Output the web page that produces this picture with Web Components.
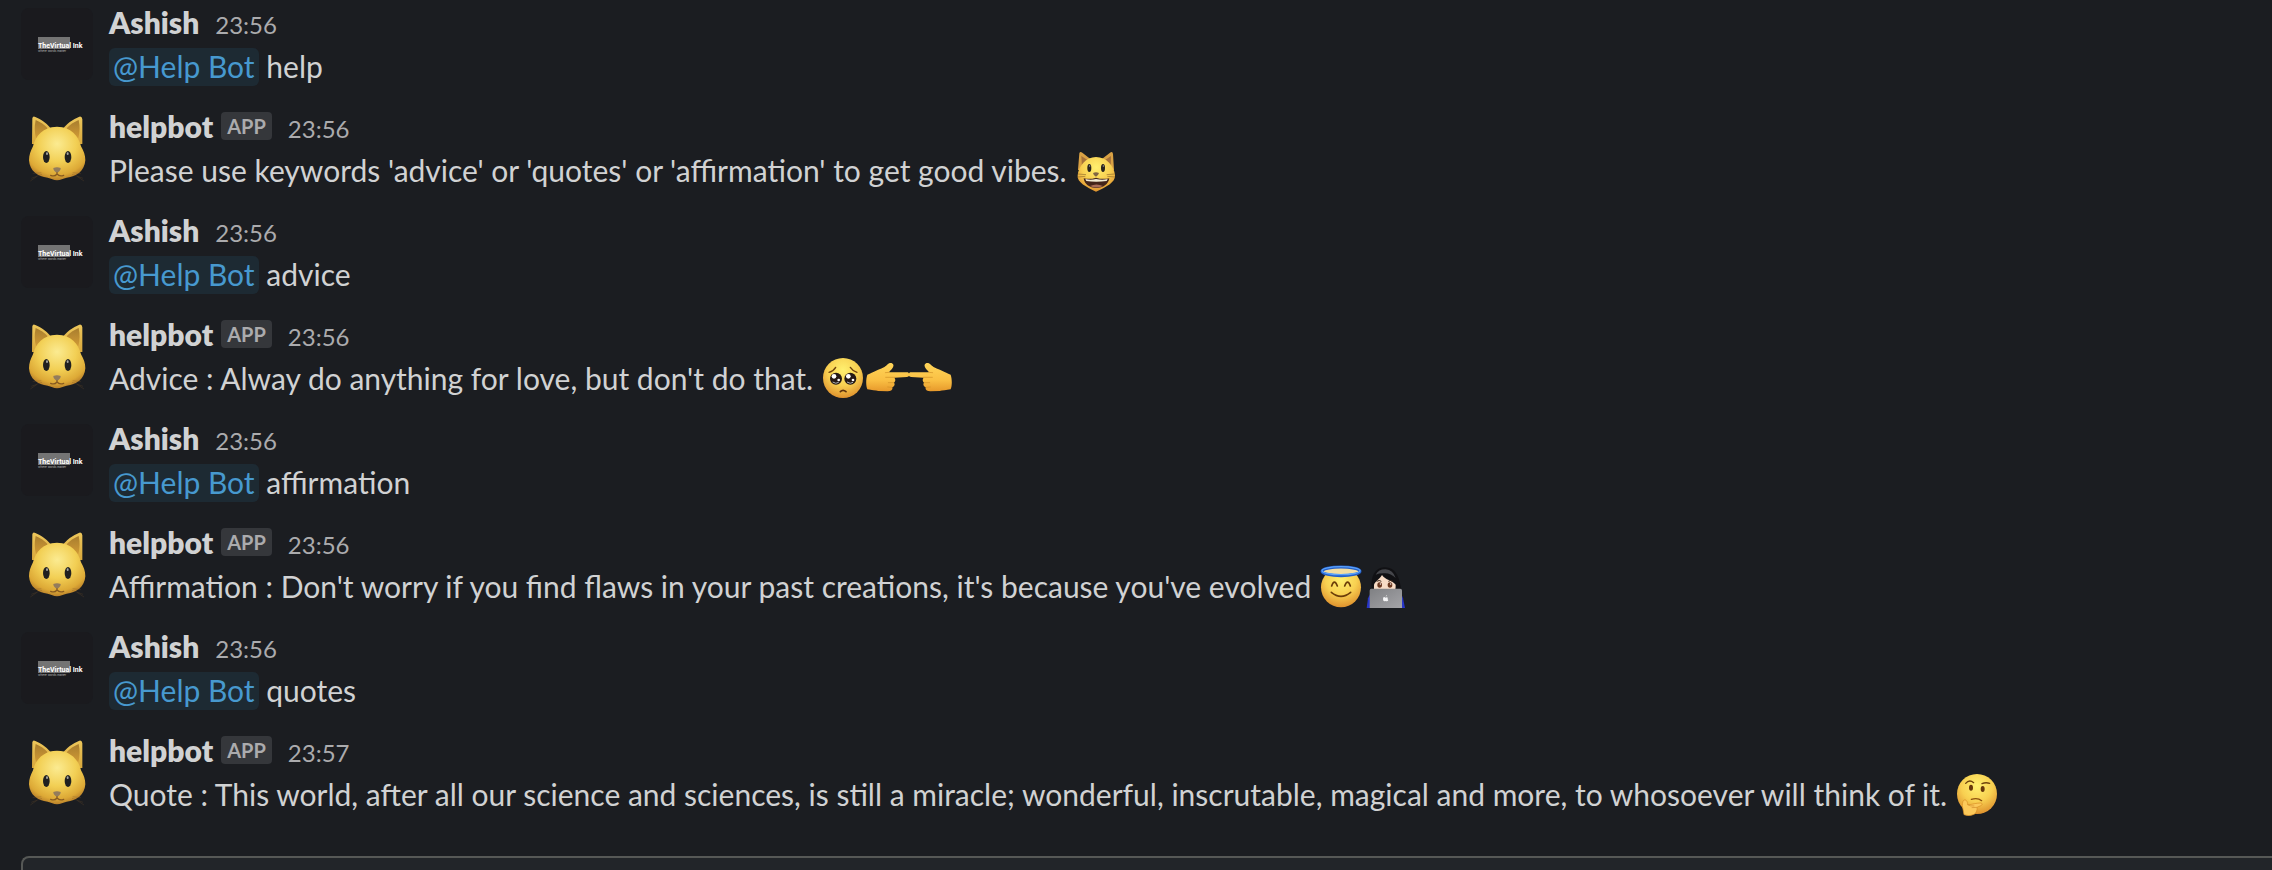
<!DOCTYPE html>
<html lang="en">
<head>
<meta charset="utf-8">
<meta name="viewport" content="width=device-width, initial-scale=1">
<title>Help Bot channel</title>
<style>
html, body { margin: 0; height: 100%; }
body {
  --bg: #1b1d21; --text: #d1d2d3; --muted: #ababad; --link: #4799cf; --mention: #1d2a33;
  --badge: #35373b; --field: #222529; --line: #565856;
  background: var(--bg); color: var(--text);
  font: 400 30px/44px Lato, "Liberation Sans", sans-serif;
}
</style>
</head>
<body>
<chat-pane>
  <chat-message name="Ashish" time="23:56"><user-mention>@Help Bot</user-mention> help</chat-message>
  <chat-message name="helpbot" time="23:56" app>Please use keywords 'advice' or 'quotes' or 'affirmation' to get good vibes. <emoji-icon name="cat"></emoji-icon></chat-message>
  <chat-message name="Ashish" time="23:56"><user-mention>@Help Bot</user-mention> advice</chat-message>
  <chat-message name="helpbot" time="23:56" app>Advice : Alway do anything for love, but don't do that. <emoji-icon name="pleading"></emoji-icon><emoji-icon name="right"></emoji-icon><emoji-icon name="left"></emoji-icon></chat-message>
  <chat-message name="Ashish" time="23:56"><user-mention>@Help Bot</user-mention> affirmation</chat-message>
  <chat-message name="helpbot" time="23:56" app>Affirmation : Don't worry if you find flaws in your past creations, it's because you've evolved <emoji-icon name="halo"></emoji-icon><emoji-icon name="coder"></emoji-icon></chat-message>
  <chat-message name="Ashish" time="23:56"><user-mention>@Help Bot</user-mention> quotes</chat-message>
  <chat-message name="helpbot" time="23:57" app>Quote : This world, after all our science and sciences, is still a miracle; wonderful, inscrutable, magical and more, to whosoever will think of it. <emoji-icon name="thinking"></emoji-icon></chat-message>
  <message-composer slot="composer"></message-composer>
</chat-pane>

<script>
const define = (tag, render) => customElements.define(tag, class extends HTMLElement {
  constructor() { super(); this.attachShadow({ mode: 'open' }); }
  connectedCallback() { this.shadowRoot.innerHTML = render(this); }
});

/* Emoji drawings, in a 132-unit square (three units to a pixel). */
const face = '<circle cx="66" cy="66" r="60" fill="url(#f)"/>';
const hand = `
  <path d="M7 56C17 52 24 49 30 46C42 39 57 36 66 27C73 19 82 20 85 26C87 32 80 39 74 46L73 49L126 49C135 49 135 63 126 63L88 65C92 69 92 76 87 80C91 85 88 92 82 94C84 102 78 106 68 106L40 105C32 104 20 102 7 100C2 88 3 68 7 56Z" fill="url(#h)"/>
  <path d="M62 64L89 64M70 80L86 80M68 93L80 94M73 49L61 50" fill="none" stroke="#d08f26" stroke-width="2" stroke-linecap="round"/>`;
const art = {
  cat: `
    <path d="M12 66L16 16Q18 9 25 14L53 36L80 36L108 14Q116 9 117 18L120 66Z" fill="#d9a144"/>
    <path d="M22 24L44 38L24 58ZM111 24L90 38L110 58Z" fill="#a5713a"/>
    <path d="M66 27C97 27 121 54 123 82C125 103 96 118 66 131C38 118 8 103 11 82C14 54 36 27 66 27Z" fill="url(#f)"/>
    <ellipse cx="46" cy="60" rx="6" ry="12" fill="#29231d"/><ellipse cx="87" cy="60" rx="6" ry="12" fill="#29231d"/>
    <circle cx="47" cy="54" r="2" fill="#aaa"/><circle cx="88" cy="54" r="2" fill="#aaa"/>
    <path d="M57 75Q66 71 75 75Q73 82 66 86Q58 82 57 75Z" fill="#816643"/>
    <path d="M29 91Q48 95 66 89Q85 95 106 91C103 109 88 120 67 120S31 108 29 91Z" fill="#44251a"/>
    <path d="M34 93Q50 98 66 93Q85 98 101 93L98 99Q66 104 37 99Z" fill="#f3ecd4"/>
    <path d="M48 114Q67 105 87 114Q67 123 48 114Z" fill="#a86d58"/>
    <path d="M12 78L36 80M11 87L34 85M122 78L98 80M123 87L100 85" stroke="#94702c" stroke-width="2"/>`,
  pleading: face + `
    <circle cx="45" cy="68" r="18" fill="#251915"/><circle cx="88" cy="68" r="18" fill="#251915"/>
    <circle cx="39" cy="61" r="7" fill="#fff"/><circle cx="82" cy="61" r="7" fill="#fff"/>
    <circle cx="53" cy="72" r="4" fill="#fff"/><circle cx="96" cy="72" r="4" fill="#fff"/>
    <path d="M35 78Q45 85 53 79M78 78Q88 85 96 79" fill="none" stroke="#aeb5ba" stroke-width="3"/>
    <path d="M24 49Q38 45 44 34M88 34Q95 45 108 49" fill="none" stroke="#71430d" stroke-width="4" stroke-linecap="round"/>
    <path d="M58 107Q66 99 75 107" fill="none" stroke="#5c310d" stroke-width="5" stroke-linecap="round"/>`,
  right: hand,
  left: `<g transform="matrix(-1 0 0 1 132 0)">${hand}</g>`,
  halo: `
    <circle cx="66" cy="70" r="60" fill="url(#f)"/>
    <ellipse cx="66" cy="22" rx="54" ry="10" fill="#f3dda0"/>
    <ellipse cx="66" cy="22" rx="57" ry="13" fill="none" stroke="#245fc9" stroke-width="9"/>
    <ellipse cx="66" cy="20" rx="57" ry="12" fill="none" stroke="#5ba2fa" stroke-width="4"/>
    <path d="M38 66Q46 43 55 66M77 66Q86 43 94 66M37 85Q66 109 95 85" fill="none" stroke="#6b3d09" stroke-width="5" stroke-linecap="round"/>`,
  coder: `
    <path d="M11 132L15 103Q20 88 35 85L102 85Q116 88 120 103L126 132Z" fill="#2735c7"/>
    <path d="M26 76C22 35 38 11 62 10C94 7 107 33 113 67Q116 85 109 98L88 94L43 88L24 80Z" fill="#111114"/>
    <path d="M38 32Q48 15 68 16Q90 18 98 42Q82 26 62 28Q47 28 38 32Z" fill="#45464b"/>
    <path d="M33 64C33 54 50 46 57 33C67 49 88 48 98 62C99 86 87 106 65 106S31 88 33 64Z" fill="#f8dcc6"/>
    <ellipse cx="50" cy="63" rx="7" ry="8" fill="#6a371f"/><ellipse cx="81" cy="63" rx="7" ry="8" fill="#6a371f"/>
    <circle cx="52" cy="60" r="2" fill="#fff"/><circle cx="83" cy="60" r="2" fill="#fff"/>
    <path d="M41 52Q49 47 55 52M76 52Q83 47 90 52" fill="none" stroke="#382419" stroke-width="3"/>
    <path d="M25 74H112Q117 74 117 80V132H20V80Q20 74 25 74Z" fill="url(#m)"/>
    <path d="M68 101Q60 96 60 105Q60 114 68 111Q74 114 76 108Q71 105 75 102Q72 98 68 101ZM68 98Q69 93 72 93Q72 97 68 98Z" fill="#f5f5f6"/>`,
  thinking: face + `
    <path d="M32 34Q43 21 56 32M81 35Q92 30 104 34" fill="none" stroke="#6f430d" stroke-width="4" stroke-linecap="round"/>
    <ellipse cx="48" cy="47" rx="6" ry="9" fill="#67370b"/><ellipse cx="83" cy="51" rx="6" ry="9" fill="#67370b"/>
    <path d="M49 82Q68 76 80 86" fill="none" stroke="#8b500e" stroke-width="4" stroke-linecap="round"/>
    <path d="M27 128L22 101C22 90 25 84 28 84C34 82 38 90 38 98C48 99 56 94 75 93C83 92 84 100 75 102L66 106C68 113 64 122 58 127Q43 135 27 128Z" fill="#fcc95a" stroke="#d88c23" stroke-width="2"/>
    <path d="M38 98Q46 103 58 102M66 106L50 107" fill="none" stroke="#d08a2a" stroke-width="2"/>`
};
const labels = { cat: 'grinning cat', pleading: 'pleading face', right: 'pointing right', left: 'pointing left',
  halo: 'smiling face with halo', coder: 'technologist', thinking: 'thinking face' };

define('emoji-icon', el => {
  const n = el.getAttribute('name');
  return `<style>:host{display:inline-block;width:44px;height:44px;vertical-align:top}svg{display:block;width:100%;height:100%}</style>
  <svg viewBox="0 0 132 132" role="img" aria-label="${labels[n]}"><defs>
    <radialGradient id="f" cx=".5" cy=".3" r=".7"><stop offset="0" stop-color="#fff06f"/><stop offset=".55" stop-color="#f8d051"/><stop offset="1" stop-color="#df922e"/></radialGradient>
    <linearGradient id="h" x2="0" y2="1"><stop stop-color="#ffd559"/><stop offset=".6" stop-color="#fac044"/><stop offset="1" stop-color="#e7992b"/></linearGradient>
    <linearGradient id="m" x2="1" y2="1"><stop stop-color="#7f8083"/><stop offset="1" stop-color="#a4a4a8"/></linearGradient>
  </defs>${art[n]}</svg>`;
});

define('user-avatar', el => `<style>:host{display:block;width:72px;height:72px;flex:none}svg{display:block;width:100%;height:100%}</style>` +
  (el.hasAttribute('app') ? `
  <svg viewBox="0 0 216 216" role="img" aria-label="helpbot"><defs>
    <radialGradient id="c" cx=".5" cy=".32" r=".68"><stop offset="0" stop-color="#fbeb91"/><stop offset=".5" stop-color="#f2cf54"/><stop offset=".85" stop-color="#dda936"/><stop offset="1" stop-color="#b9802a"/></radialGradient>
    <linearGradient id="e" x2="0" y2="1"><stop stop-color="#edc75b"/><stop offset="1" stop-color="#d9a83c"/></linearGradient>
    <linearGradient id="i" x2="0" y2="1"><stop stop-color="#a87d2e"/><stop offset="1" stop-color="#d09a35"/></linearGradient></defs>
    <path d="M33 96L34 19Q36 10 43 15Q70 26 88 47L128 47Q146 26 175 14Q183 12 184 22L184 96Z" fill="url(#e)"/>
    <path d="M44 24Q66 33 80 49L45 79Q38 52 44 24ZM173 24Q151 33 137 49L172 79Q179 52 173 24Z" fill="url(#i)"/>
    <path d="M108 44C149 44 174 73 180 103C188 117 193 129 193 145C191 177 166 195 137 197C126 199 119 205 108 205C97 205 91 199 80 197C50 194 26 177 24 145C24 129 29 117 36 103C42 73 67 44 108 44Z" fill="url(#c)"/>
    <ellipse cx="76" cy="135" rx="10" ry="18" fill="#202020"/><ellipse cx="141" cy="135" rx="10" ry="18" fill="#202020"/>
    <ellipse cx="78" cy="125" rx="3" ry="4" fill="#a5a5a0"/><ellipse cx="140" cy="125" rx="3" ry="4" fill="#a5a5a0"/>
    <path d="M97 168Q108 163 119 168Q120 175 108 183Q96 175 97 168Z" fill="#937c5c"/>
    <path d="M108 182V186M89 190Q101 195 108 186Q116 195 128 190" fill="none" stroke="#875a20" stroke-width="4" stroke-linecap="round"/>
    <path d="M61 182L35 185M63 187L31 199M155 182L180 185M153 187L186 199M48 193L28 207M168 193L189 207" stroke="#72512a" stroke-width="2" opacity=".4"/>
  </svg>` : `
  <svg viewBox="0 0 72 72" role="img" aria-label="Ashish">
    <rect width="72" height="72" rx="8" fill="#1a1a1e"/><rect x="17" y="29" width="32" height="12" fill="#747474"/>
    <text x="17" y="40" font-family="Roboto, sans-serif" font-size="7" font-weight="700" fill="#fff">TheVirtual Ink</text>
    <text x="17" y="44" font-family="Inter, sans-serif" font-size="3" fill="#bbb">where words matter</text>
  </svg>`));

define('user-mention', () => `<style>
  a{color:var(--link);background:var(--mention);border-radius:6px;padding:0 4px 2px;text-decoration:none}
  </style><a href="#help-bot"><slot></slot></a>`);

define('chat-message', el => {
  const app = el.hasAttribute('app');
  return `<style>
  :host{display:flex;gap:16px;padding:0 20px 16px 21px}
  user-avatar{margin-top:8px}
  .body{flex:1;min-width:0}
  header{display:flex;align-items:baseline;height:44px}
  b{font-weight:800}
  .badge{align-self:center;margin-left:8px;padding:0 6px;border-radius:4px;background:var(--badge);color:var(--muted);font-size:20px;line-height:28px;font-weight:700}
  time{margin-left:16px;color:var(--muted);font-size:24px;line-height:24px}
  p{margin:0}
  </style>
  <user-avatar ${app ? 'app' : ''}></user-avatar>
  <div class="body"><header><b>${el.getAttribute('name')}</b>${app ? '<span class="badge">APP</span>' : ''}<time>${el.getAttribute('time')}</time></header>
  <p><slot></slot></p></div>`;
});

define('message-composer', () => `<style>
  :host{display:flex;flex:1;min-height:0;margin:8px 0 0 21px}
  textarea{display:block;box-sizing:border-box;width:100%;height:100%;padding:0 16px;border:2px solid var(--line);border-width:2px 0 0 2px;border-radius:8px 0 0 0;background:var(--field);color:inherit;font:inherit;resize:none;outline:0;overflow:hidden}
  </style><textarea aria-label="Message"></textarea>`);

define('chat-pane', () => `<style>:host{display:block;height:100%}main{display:flex;flex-direction:column;height:100%}section{flex:none;padding-bottom:16px}</style>
  <main><section><slot></slot></section><slot name="composer"></slot></main>`);
</script>
</body>
</html>
